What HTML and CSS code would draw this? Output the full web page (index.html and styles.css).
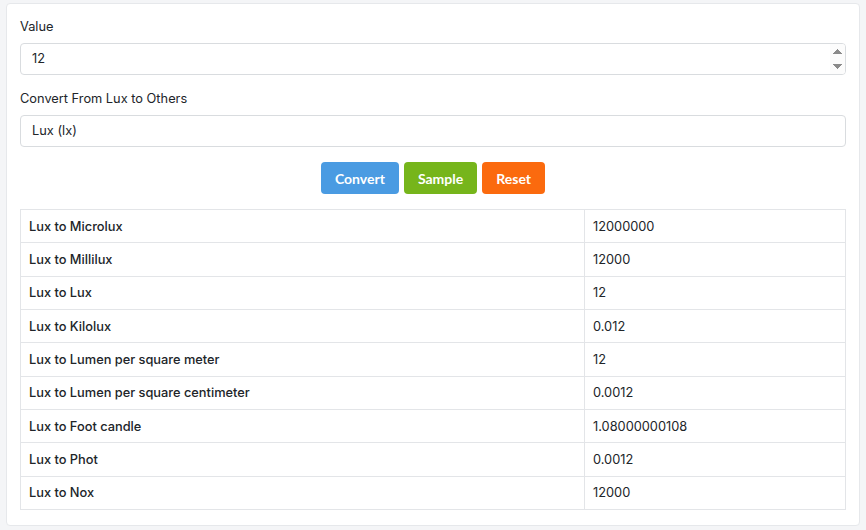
FILE: index.html
```html
<!DOCTYPE html>
<html lang="en">
<head>
<meta charset="utf-8">
<title>Lux Converter</title>
<link rel="stylesheet" href="styles.css">
</head>
<body>
<div class="card">
  <label class="label" for="val">Value</label>
  <input id="val" class="field" type="number" value="12">
  <label class="label" for="from">Convert From Lux to Others</label>
  <input id="from" class="field" type="text" value="Lux (lx)" readonly>
  <div class="actions">
    <button class="btn btn-blue">Convert</button>
    <button class="btn btn-green">Sample</button>
    <button class="btn btn-orange">Reset</button>
  </div>
  <table class="results">
    <tbody>
      <tr><th>Lux to Microlux</th><td>12000000</td></tr>
      <tr><th>Lux to Millilux</th><td>12000</td></tr>
      <tr><th>Lux to Lux</th><td>12</td></tr>
      <tr><th>Lux to Kilolux</th><td>0.012</td></tr>
      <tr><th>Lux to Lumen per square meter</th><td>12</td></tr>
      <tr><th>Lux to Lumen per square centimeter</th><td>0.0012</td></tr>
      <tr><th>Lux to Foot candle</th><td>1.08000000108</td></tr>
      <tr><th>Lux to Phot</th><td>0.0012</td></tr>
      <tr><th>Lux to Nox</th><td>12000</td></tr>
    </tbody>
  </table>
</div>
</body>
</html>
```

FILE: styles.css
```css
html, body {
  margin: 0;
  padding: 0;
  background: #f4f5f7;
}
body {
  font-family: Inter, "Noto Sans", sans-serif;
  font-size: 12.8px;
  color: #212529;
  padding: 3px 6px 5px 6px;
}
.card {
  background: #fff;
  border: 1px solid #e6e8eb;
  border-radius: 4px;
  padding: 12px 13px 15px 13px;
  display: flex;
  flex-direction: column;
}
.label {
  display: block;
  line-height: 20px;
  padding-top: 1px;
  margin-bottom: 6px;
}
.field {
  box-sizing: border-box;
  height: 32px;
  width: 100%;
  border: 1px solid #d9dcdf;
  border-radius: 4px;
  padding: 0 0 1px 11px;
  font-family: Inter, "Noto Sans", sans-serif;
  font-size: 12.8px;
  color: #212529;
  margin: 0 0 13px 0;
  outline: none;
}
.field::-webkit-inner-spin-button,
.field::-webkit-outer-spin-button {
  opacity: 1;
  height: 30px;
}
.actions {
  display: flex;
  justify-content: center;
  gap: 5px;
  margin: 2px 0 15px 0;
}
.btn {
  height: 32px;
  border: none;
  border-radius: 4px;
  color: #fff;
  font-family: Lato, "Liberation Sans", sans-serif;
  font-size: 14px;
  font-weight: 700;
  padding: 0 14px;
  cursor: pointer;
}
.btn-blue { background: #4a9be2; }
.btn-green { background: #76b51b; }
.btn-orange { background: #fb6a0e; }
.results {
  width: 100%;
  border-collapse: collapse;
  border: 1px solid #e3e5e8;
}
.results th, .results td {
  border: 1px solid #e3e5e8;
  height: 32.33px;
  padding: 0 8px;
  text-align: left;
  vertical-align: middle;
}
.results th {
  width: 547px;
  font-weight: 500;
}
.results td {
  font-weight: 400;
}
```
